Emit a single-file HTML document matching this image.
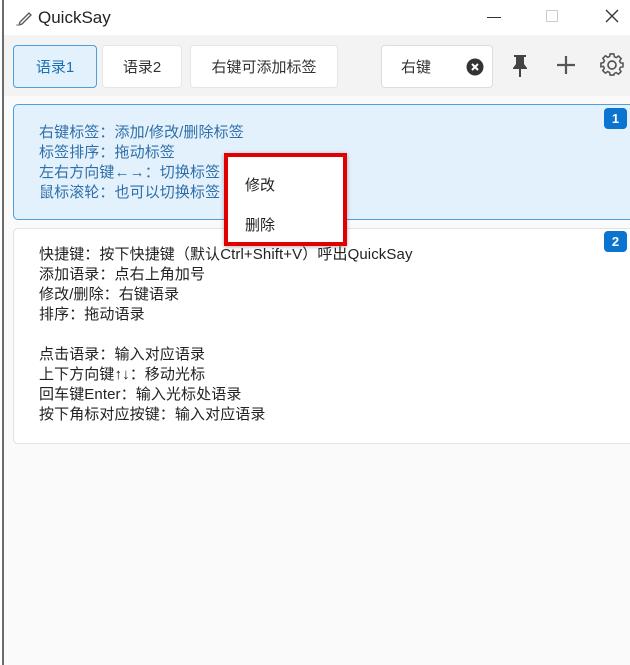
<!DOCTYPE html>
<html><head><meta charset="utf-8"><style>
*{box-sizing:border-box;margin:0;padding:0}
body{width:630px;height:665px;overflow:hidden;background:#fafafa;font-family:"Liberation Sans","Noto Sans CJK SC",sans-serif;position:relative;color:#222}
.abs{position:absolute}
.lb{left:0;top:0;width:4px;height:665px;background:#fff;border-right:2px solid #6b6b6b}
.title{left:4px;top:0;width:626px;height:35px;background:#fff}
.tool{left:4px;top:35px;width:626px;height:61px;background:#f3f3f3}
.btn{top:45px;height:43px;background:#fff;border:1px solid #e6e6e6;border-radius:4px;font-size:15px;display:flex;align-items:center;justify-content:center;color:#333}
.card{left:13px;width:630px;border-radius:5px}
.t{position:absolute;left:25px;font-size:15px;line-height:20px;letter-spacing:0.1px}
.badge{position:absolute;left:590px;width:23px;height:21px;background:#0a74d0;color:#fff;border-radius:4px;font-size:13px;font-weight:bold;text-align:center;line-height:21px}
</style></head><body>
<div class="abs lb"></div>
<div class="abs title">
 <svg class="abs" style="left:12px;top:10px" width="18" height="16" viewBox="0 0 18 16"><path d="M4 12 L13 3 L15 5 L6 14 L3 15 Z" fill="none" stroke="#555" stroke-width="1.3"/><path d="M0 15 H4" stroke="#888" stroke-width="1"/></svg>
 <div class="abs" style="left:34px;top:8px;font-size:17px;color:#222">QuickSay</div>
 <div class="abs" style="left:483px;top:17px;width:14px;height:1px;background:#333"></div>
 <div class="abs" style="left:542px;top:10px;width:12px;height:12px;border:1px solid #ccc"></div>
 <svg class="abs" style="left:601px;top:9px" width="14" height="14"><path d="M1 1L13 13M13 1L1 13" stroke="#333" stroke-width="1.3"/></svg>
</div>
<div class="abs tool"></div>
<div class="abs btn" style="left:13px;width:84px;background:#e3f1fd;border-color:#4a9fe0;color:#1a6fb5">语录1</div>
<div class="abs btn" style="left:102px;width:80px">语录2</div>
<div class="abs btn" style="left:190px;width:148px">右键可添加标签</div>
<div class="abs btn" style="left:381px;width:112px;justify-content:flex-start;padding-left:19px;border-color:#ddd">右键
 <svg class="abs" style="left:84px;top:12px" width="18" height="18"><circle cx="9" cy="9" r="8.5" fill="#333"/><path d="M6 6L12 12M12 6L6 12" stroke="#fff" stroke-width="2"/></svg></div>
<svg class="abs" style="left:510px;top:54px" width="20" height="24" viewBox="0 0 20 24"><path d="M4 1H16V3H14V10L17 14V15H3V14L6 10V3H4Z" fill="#444"/><rect x="9" y="15" width="2" height="8" fill="#444"/></svg>
<svg class="abs" style="left:556px;top:55px" width="20" height="20"><path d="M10 1V19M1 10H19" stroke="#555" stroke-width="2.2"/></svg>
<svg class="abs" style="left:600px;top:53px" width="24" height="24" viewBox="0 0 24 24"><path d="M10 1h4l.6 3 2 1 2.6-1.7 2.8 2.8L20.3 8.7l1 2L24 11v4l-2.8.6-1 2 1.7 2.6-2.8 2.8-2.6-1.7-2 1L14 24h-4l-.6-2.8-2-1-2.6 1.7-2.8-2.8 1.7-2.6-1-2L0 15v-4l2.8-.6 1-2L2.1 5.8 4.9 3l2.6 1.7 2-1Z" transform="scale(.92) translate(1 0)" fill="none" stroke="#555" stroke-width="1.7"/><circle cx="12" cy="12" r="4" fill="none" stroke="#555" stroke-width="1.7"/></svg>

<div class="abs card" style="top:104px;height:116px;background:#e3f1fd;border:1.5px solid #4a9fe0;color:#2f6fa8">
 <div class="badge" style="top:3px">1</div>
 <div class="t" style="top:18px">右键标签：添加/修改/删除标签<br>标签排序：拖动标签<br>左右方向键←→：切换标签<br>鼠标滚轮：也可以切换标签</div>
</div>
<div class="abs card" style="top:228px;height:216px;background:#fff;border:1px solid #e2e2e2">
 <div class="badge" style="top:2px">2</div>
 <div class="t" style="top:16px;color:#222">快捷键：按下快捷键（默认Ctrl+Shift+V）呼出QuickSay<br>添加语录：点右上角加号<br>修改/删除：右键语录<br>排序：拖动语录<br><br>点击语录：输入对应语录<br>上下方向键↑↓：移动光标<br>回车键Enter：输入光标处语录<br>按下角标对应按键：输入对应语录</div>
</div>
<div class="abs" style="left:224px;top:153px;width:123px;height:93px;border:4px solid #e00000;background:#fff;box-shadow:0 1px 4px rgba(0,0,0,.3)">
 <div class="abs" style="left:17px;top:17px;font-size:15px">修改</div>
 <div class="abs" style="left:17px;top:57px;font-size:15px">删除</div>
</div>
</body></html>
